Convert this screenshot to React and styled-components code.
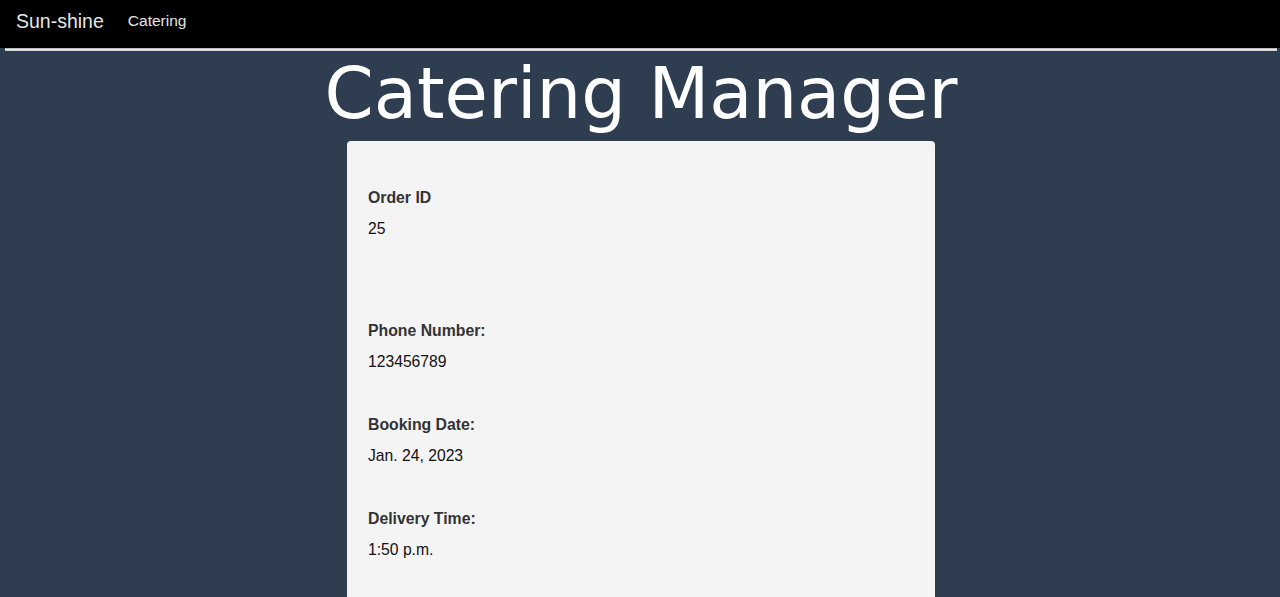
import React from "react";
import styled, { createGlobalStyle } from "styled-components";

const GlobalStyle = createGlobalStyle`
  html, body {
    margin: 0;
    padding: 0;
    background-color: #2e3e50;
    font-family: "Liberation Sans", Arial, sans-serif;
  }
`;

const Nav = styled.nav`
  background-color: #000;
  height: 48px;
  box-sizing: border-box;
  display: flex;
  align-items: flex-start;
  padding: 9px 16px 0;
  gap: 24px;
`;

const Brand = styled.a`
  color: #e6e6e6;
  font-size: 19.5px;
  line-height: 24px;
  text-decoration: none;
`;

const NavLink = styled.a`
  color: #e6e6e6;
  font-size: 15.5px;
  line-height: 24px;
  text-decoration: none;
`;

const Rule = styled.hr`
  margin: 0 3px 0 5px;
  border: none;
  height: 3px;
  background: linear-gradient(#8a8f96, #f2f2f2 40%, #c8c8c8);
`;

const Title = styled.h1`
  font-family: "DejaVu Sans", sans-serif;
  font-weight: normal;
  color: #fff;
  font-size: 70.5px;
  text-align: center;
  margin: 0 0 0 2px;
  line-height: 87px;
`;

const Card = styled.div`
  background-color: #f4f4f4;
  width: 588px;
  margin: 3px 0 0 calc(50% - 293px);
  border-radius: 4px;
  padding: 39px 21px 40px;
  box-sizing: border-box;
  min-height: 500px;
`;

const Field = styled.div`
  margin-bottom: ${(p) => p.$gap || 32}px;
`;

const Label = styled.div`
  font-weight: bold;
  color: #333;
  font-size: 15.8px;
  line-height: 36px;
`;

const Value = styled.div`
  color: #111;
  font-size: 15.7px;
  line-height: 26px;
`;

const fields = [
  { label: "Order ID", value: "25", gap: 71 },
  { label: "Phone Number:", value: "123456789" },
  { label: "Booking Date:", value: "Jan. 24, 2023" },
  { label: "Delivery Time:", value: "1:50 p.m." },
];

export default function App() {
  return (
    <>
      <GlobalStyle />
      <Nav>
        <Brand>Sun-shine</Brand>
        <NavLink>Catering</NavLink>
      </Nav>
      <Rule />
      <Title>Catering Manager</Title>
      <Card>
        {fields.map((f) => (
          <Field key={f.label} $gap={f.gap}>
            <Label>{f.label}</Label>
            <Value>{f.value}</Value>
          </Field>
        ))}
      </Card>
    </>
  );
}
